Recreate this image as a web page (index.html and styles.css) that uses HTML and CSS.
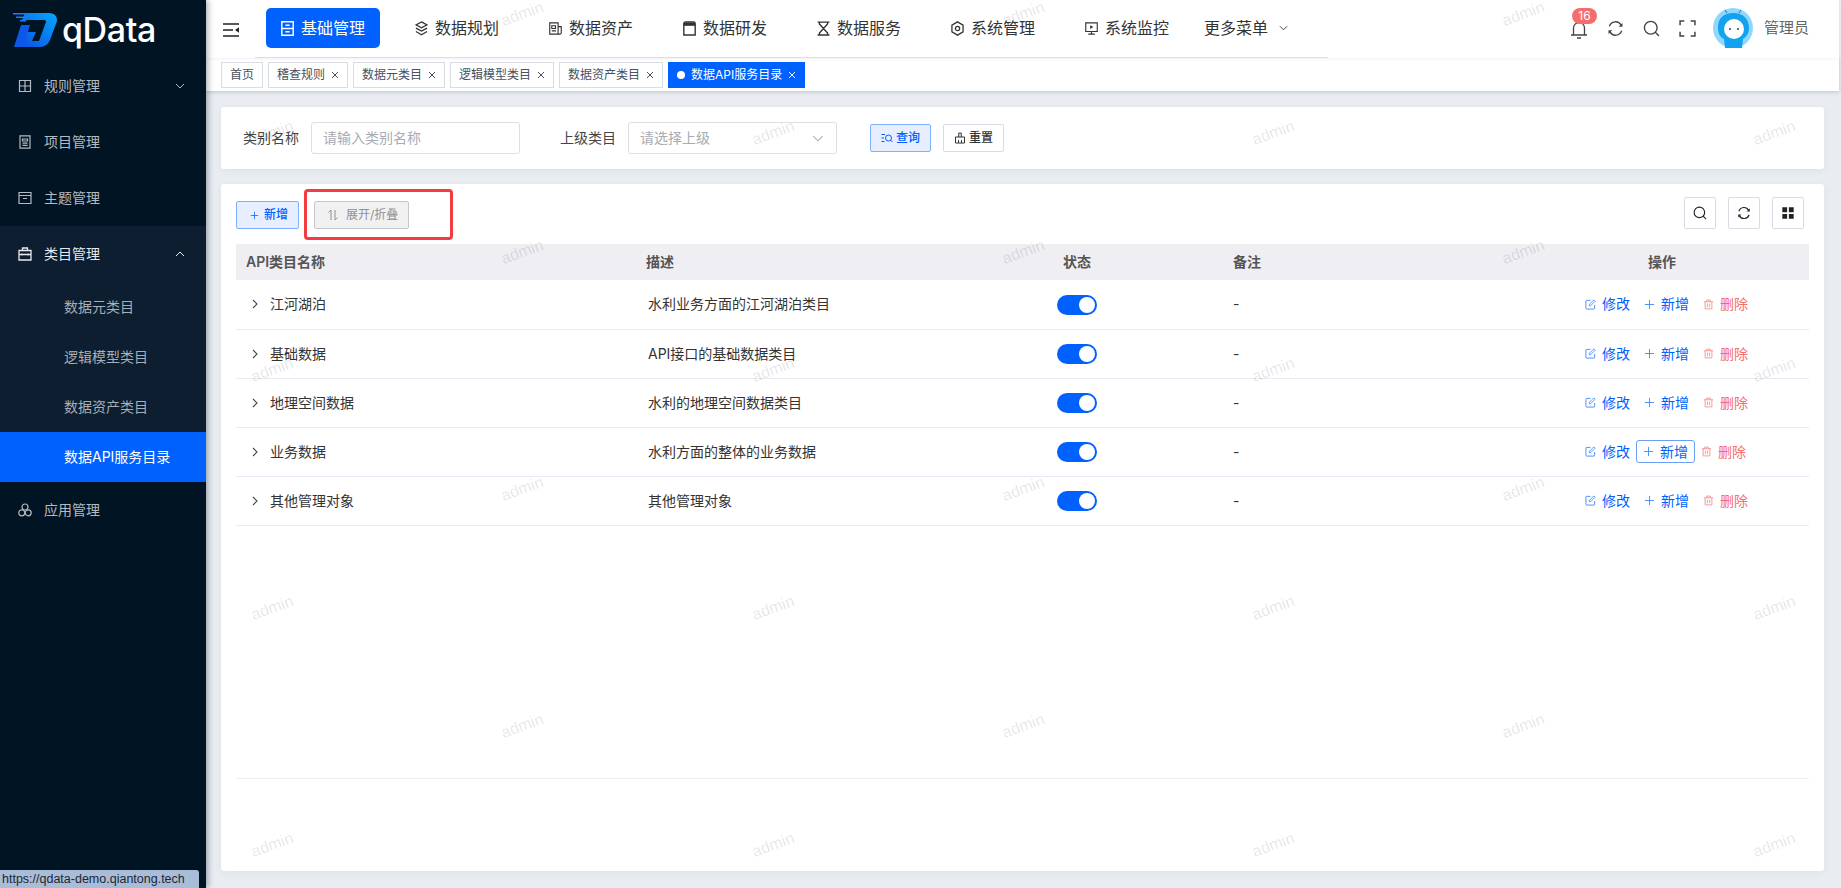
FILE: index.html
```html
<!DOCTYPE html>
<html lang="zh-CN">
<head>
<meta charset="utf-8">
<title>qData</title>
<link rel="stylesheet" href="styles.css">
</head>
<body>
<svg class="defs" width="0" height="0">
  <defs>
    <symbol id="i-edit" viewBox="0 0 12 12"><path d="M10.5 6.5V10.2a.8.8 0 0 1-.8.8H1.8a.8.8 0 0 1-.8-.8V2.3a.8.8 0 0 1 .8-.8H6" fill="none" stroke="currentColor"/><path d="M4.6 7.4 5 5.6 9.6 1l1.4 1.4L6.4 7z" fill="none" stroke="currentColor" stroke-width=".9"/></symbol>
    <symbol id="i-plus" viewBox="0 0 12 12"><path d="M6 1v10M1 6h10" fill="none" stroke="currentColor"/></symbol>
    <symbol id="i-trash" viewBox="0 0 12 12"><path d="M1 3h10M4 3V1.2h4V3M2.3 3v7.8h7.4V3M4.8 5v4M7.2 5v4" fill="none" stroke="currentColor"/></symbol>
    <symbol id="i-right" viewBox="0 0 6 10"><path d="M1 1l4 4-4 4" fill="none" stroke="currentColor" stroke-width="1.1"/></symbol>
    <symbol id="i-x" viewBox="0 0 8 8"><path d="M1 1l6 6M7 1L1 7" fill="none" stroke="currentColor" stroke-width="1"/></symbol>
    <symbol id="i-refresh" viewBox="0 0 16 16"><path d="M2.2 6A6 6 0 0 1 13.3 5M13.8 10A6 6 0 0 1 2.7 11" fill="none" stroke="currentColor" stroke-width="1.3"/><path d="M14.6 2.8v3.6h-3.6zM1.4 13.2V9.6H5z" fill="currentColor"/></symbol>
    <symbol id="i-search" viewBox="0 0 16 16"><circle cx="7.3" cy="7.3" r="6" fill="none" stroke="currentColor" stroke-width="1.3"/><path d="M11.6 11.6 15 15" fill="none" stroke="currentColor" stroke-width="1.3"/></symbol>
  </defs>
</svg>

<aside class="sidebar">
  <div class="logo">
    <svg class="logo-mark" viewBox="0 0 44 34" width="44" height="34">
      <defs>
        <linearGradient id="lg" x1="0" y1="1" x2="1" y2="0"><stop offset="0" stop-color="#0a4fe0"/><stop offset="1" stop-color="#05a8ff"/></linearGradient>
      </defs>
      <path d="M12 0H36Q44 0 44 8L37 27Q34 34 27 34H6L11 19H23L19 28H26L33 9Q33 7 31 7H9z" fill="url(#lg)"/>
      <path d="M8 12H17L11 34H1z" fill="#0b58ea"/>
      <path d="M0 0h13v1.6H0zM3 3.5h11v1.6H3zM7 7h6v1.6H7z" fill="#1c7bff"/>
    </svg>
    <span class="logo-text">qData</span>
  </div>
  <nav class="menu">
    <a class="menu-item">
      <svg class="mi" viewBox="0 0 14 14"><path d="M1.5 1.5h11v11h-11zM7 1.5v11M1.5 7h11" fill="none" stroke="currentColor" stroke-width="1.2"/></svg>
      <span>规则管理</span>
      <svg class="arrow" viewBox="0 0 10 6"><path d="M1 1l4 4 4-4" fill="none" stroke="currentColor"/></svg>
    </a>
    <a class="menu-item">
      <svg class="mi" viewBox="0 0 14 14"><path d="M2 .8h10v12.4H2zM4.5 4h5v2h-5zM4.5 8.2h5M4.5 10.4h5" fill="none" stroke="currentColor" stroke-width="1.2"/></svg>
      <span>项目管理</span>
    </a>
    <a class="menu-item">
      <svg class="mi" viewBox="0 0 14 14"><path d="M1 1.5h12v11H1zM1 4.5h12M5 7.5h4" fill="none" stroke="currentColor" stroke-width="1.2"/></svg>
      <span>主题管理</span>
    </a>
    <div class="group">
      <a class="menu-item open">
        <svg class="mi" viewBox="0 0 14 14"><path d="M1 3.5h12v9.5H1zM4.5 3.5V1h5v2.5M1 7.5h12M4 6.5v2M10 6.5v2" fill="none" stroke="currentColor" stroke-width="1.3"/></svg>
        <span>类目管理</span>
        <svg class="arrow" viewBox="0 0 10 6"><path d="M1 5l4-4 4 4" fill="none" stroke="currentColor"/></svg>
      </a>
      <a class="sub-item">数据元类目</a>
      <a class="sub-item">逻辑模型类目</a>
      <a class="sub-item">数据资产类目</a>
      <a class="sub-item active">数据API服务目录</a>
    </div>
    <a class="menu-item">
      <svg class="mi" viewBox="0 0 14 14"><circle cx="7" cy="4" r="3" fill="none" stroke="currentColor" stroke-width="1.2"/><circle cx="3.8" cy="9.8" r="3" fill="none" stroke="currentColor" stroke-width="1.2"/><circle cx="10.2" cy="9.8" r="3" fill="none" stroke="currentColor" stroke-width="1.2"/></svg>
      <span>应用管理</span>
    </a>
  </nav>
</aside>

<main class="main">
  <header class="topbar">
    <svg class="hamburger" viewBox="0 0 16 14"><path d="M0 1h16M0 7h10M0 13h16" fill="none" stroke="#222" stroke-width="1.6"/><path d="M16 4.2v5.6L12 7z" fill="#222"/></svg>
    <div class="topnav">
      <a class="nav-item active">
        <svg class="ni" viewBox="0 0 12 14"><path d="M.7.7h10.6v12.6H.7zM.7 7h10.6M4 4h4M4 10h4" fill="none" stroke="currentColor" stroke-width="1.3"/></svg>
        基础管理
      </a>
      <a class="nav-item">
        <svg class="ni" viewBox="0 0 12 14"><path d="M6 .8 11.2 3.6 6 6.4.8 3.6zM.8 6.6 6 9.4l5.2-2.8M.8 9.8 6 12.8l5.2-3" fill="none" stroke="currentColor" stroke-width="1.2"/></svg>
        数据规划
      </a>
      <a class="nav-item">
        <svg class="ni" viewBox="0 0 14 14"><path d="M.8 1h9v12H.8zM9.8 5h3.4v6.6a1.4 1.4 0 0 1-1.4 1.4H9.800M3 4h4v3H3zM3 9.500h4.500" fill="none" stroke="currentColor" stroke-width="1.2"/></svg>
        数据资产
      </a>
      <a class="nav-item">
        <svg class="ni" viewBox="0 0 12 14"><path d="M.7 2.500a1.600 1.600 0 0 1 1.600-1.600h7.400a1.600 1.600 0 0 1 1.600 1.600v10.600H.7z" fill="none" stroke="currentColor" stroke-width="1.300"/><path d="M.7 1.500h10.600v3H.7z" fill="currentColor"/></svg>
        数据研发
      </a>
      <a class="nav-item">
        <svg class="ni" viewBox="0 0 12 14"><path d="M.5 1h11M.5 13h11M2.200 1v1.800L9.800 11.200V13M9.800 1v1.800L2.200 11.200V13" fill="none" stroke="currentColor" stroke-width="1.300"/></svg>
        数据服务
      </a>
      <a class="nav-item">
        <svg class="ni" viewBox="0 0 12 14"><path d="M6 .8 11.200 3.800v6.400L6 13.200.8 10.200V3.800z" fill="none" stroke="currentColor" stroke-width="1.200"/><circle cx="6" cy="7" r="2" fill="none" stroke="currentColor" stroke-width="1.200"/></svg>
        系统管理
      </a>
      <a class="nav-item">
        <svg class="ni" viewBox="0 0 14 14"><path d="M.8 1h12.400v9.200H.8zM7 10.200v2.800M3.500 13h7" fill="none" stroke="currentColor" stroke-width="1.200"/><path d="M5.600 3.500v4L9 5.500z" fill="currentColor"/></svg>
        系统监控
      </a>
      <a class="nav-item more">
        更多菜单
        <svg class="more-arrow" viewBox="0 0 10 6"><path d="M1 1l4 4 4-4" fill="none" stroke="currentColor"/></svg>
      </a>
    </div>
    <div class="tools">
      <span class="tool bell">
        <svg viewBox="0 0 18 18" width="18" height="18"><path d="M3.500 14V7a5.500 5.500 0 0 1 11 0v7M1 14h16M7 17h4" fill="none" stroke="#444" stroke-width="1.300"/></svg>
        <b class="badge">16</b>
      </span>
      <svg class="tool-ic"><use href="#i-refresh"/></svg>
      <svg class="tool-ic"><use href="#i-search"/></svg>
      <svg class="tool-ic" viewBox="0 0 16 16"><path d="M1 5V1h4M11 1h4v4M15 11v4h-4M5 15H1v-4" fill="none" stroke="#444" stroke-width="1.400"/></svg>
      <svg class="avatar" viewBox="0 0 40 40">
        <circle cx="20" cy="20" r="20" fill="#90d7fd"/>
        <path d="M5 20C5 8 13 5 21 5s15 5 15 15c0 6-3 9-6 11l-1 9H12l-1-9c-4-2-6-6-6-11z" fill="#12a3f0"/>
        <circle cx="21" cy="21" r="10" fill="#fff"/>
        <circle cx="17" cy="21" r="1" fill="#245"/><circle cx="25" cy="21" r="1" fill="#245"/>
        <path d="M14 5l-2-3M26 5l2-3" stroke="#0f6fd0" fill="none"/>
      </svg>
      <span class="user">管理员</span>
    </div>
  </header>

  <div class="tags">
    <a class="tag">首页</a>
    <a class="tag">稽查规则<svg class="x"><use href="#i-x"/></svg></a>
    <a class="tag">数据元类目<svg class="x"><use href="#i-x"/></svg></a>
    <a class="tag">逻辑模型类目<svg class="x"><use href="#i-x"/></svg></a>
    <a class="tag">数据资产类目<svg class="x"><use href="#i-x"/></svg></a>
    <a class="tag active"><i class="dot"></i>数据API服务目录<svg class="x"><use href="#i-x"/></svg></a>
  </div>

  <div class="content">
    <section class="card search">
      <label class="lbl">类别名称</label>
      <span class="field">请输入类别名称</span>
      <label class="lbl second">上级类目</label>
      <span class="field">请选择上级<svg class="sel-arrow" viewBox="0 0 10 6"><path d="M1 1l4 4 4-4" fill="none" stroke="currentColor" stroke-width=".9"/></svg></span>
      <button class="btn primary query"><svg class="bi" viewBox="0 0 12 12"><path d="M.5 2.500h3.500M.5 6h2.500M.5 9.500h3" fill="none" stroke="currentColor"/><circle cx="7.500" cy="6" r="3" fill="none" stroke="currentColor"/><path d="M9.700 8.200 11.500 10" stroke="currentColor" fill="none"/></svg>查询</button>
      <button class="btn"><svg class="bi" viewBox="0 0 12 12"><path d="M4.800 5V1h2.400v4M1.500 5h9v6h-9zM4.500 8v3M7.500 8v3" fill="none" stroke="currentColor"/></svg>重置</button>
    </section>

    <section class="card list">
      <div class="toolbar">
        <button class="btn primary"><svg class="bi plus"><use href="#i-plus"/></svg>新增</button>
        <button class="btn muted"><svg class="bi" viewBox="0 0 12 12"><path d="M4 11V1L1.500 3.500M8 1v10l2.500-2.500" fill="none" stroke="currentColor"/></svg>展开/折叠</button>
        <div class="spacer"></div>
        <button class="sq"><svg class="sq-ic"><use href="#i-search"/></svg></button>
        <button class="sq"><svg class="sq-ic"><use href="#i-refresh"/></svg></button>
        <button class="sq"><svg class="sq-ic" viewBox="0 0 16 16"><path d="M1.500 1.500h5.500v5.500H1.500zM9 1.500h5.500v5.500H9zM1.500 9h5.500v5.500H1.500zM9 9h5.500v5.500H9z" fill="#222"/></svg></button>
      </div>
      <div class="highlight"></div>
      <div class="table-wrap">
        <table class="table">
          <colgroup><col class="c1"><col class="c2"><col class="c3"><col class="c4"><col class="c5"></colgroup>
          <thead><tr><th>API类目名称</th><th>描述</th><th class="center">状态</th><th class="rem">备注</th><th class="center">操作</th></tr></thead>
          <tbody>
            <tr>
              <td><svg class="tree"><use href="#i-right"/></svg>江河湖泊</td>
              <td class="desc">水利业务方面的江河湖泊类目</td>
              <td class="center"><i class="switch"></i></td>
              <td class="rem">-</td>
              <td class="ops"><a class="op"><svg class="oi"><use href="#i-edit"/></svg>修改</a><a class="op"><svg class="oi"><use href="#i-plus"/></svg>新增</a><a class="op danger"><svg class="oi"><use href="#i-trash"/></svg>删除</a></td>
            </tr>
            <tr>
              <td><svg class="tree"><use href="#i-right"/></svg>基础数据</td>
              <td class="desc">API接口的基础数据类目</td>
              <td class="center"><i class="switch"></i></td>
              <td class="rem">-</td>
              <td class="ops"><a class="op"><svg class="oi"><use href="#i-edit"/></svg>修改</a><a class="op"><svg class="oi"><use href="#i-plus"/></svg>新增</a><a class="op danger"><svg class="oi"><use href="#i-trash"/></svg>删除</a></td>
            </tr>
            <tr>
              <td><svg class="tree"><use href="#i-right"/></svg>地理空间数据</td>
              <td class="desc">水利的地理空间数据类目</td>
              <td class="center"><i class="switch"></i></td>
              <td class="rem">-</td>
              <td class="ops"><a class="op"><svg class="oi"><use href="#i-edit"/></svg>修改</a><a class="op"><svg class="oi"><use href="#i-plus"/></svg>新增</a><a class="op danger"><svg class="oi"><use href="#i-trash"/></svg>删除</a></td>
            </tr>
            <tr>
              <td><svg class="tree"><use href="#i-right"/></svg>业务数据</td>
              <td class="desc">水利方面的整体的业务数据</td>
              <td class="center"><i class="switch"></i></td>
              <td class="rem">-</td>
              <td class="ops"><a class="op"><svg class="oi"><use href="#i-edit"/></svg>修改</a><a class="op focus"><svg class="oi"><use href="#i-plus"/></svg>新增</a><a class="op danger"><svg class="oi"><use href="#i-trash"/></svg>删除</a></td>
            </tr>
            <tr>
              <td><svg class="tree"><use href="#i-right"/></svg>其他管理对象</td>
              <td class="desc">其他管理对象</td>
              <td class="center"><i class="switch"></i></td>
              <td class="rem">-</td>
              <td class="ops"><a class="op"><svg class="oi"><use href="#i-edit"/></svg>修改</a><a class="op"><svg class="oi"><use href="#i-plus"/></svg>新增</a><a class="op danger"><svg class="oi"><use href="#i-trash"/></svg>删除</a></td>
            </tr>
          </tbody>
        </table>
      </div>
    </section>
  </div>
</main>

<div class="watermark" aria-hidden="true">
  <div class="wm-row odd"><span>admin</span><span>admin</span><span>admin</span><span>admin</span></div>
  <div class="wm-row"><span>admin</span><span>admin</span><span>admin</span><span>admin</span></div>
  <div class="wm-row odd"><span>admin</span><span>admin</span><span>admin</span><span>admin</span></div>
  <div class="wm-row"><span>admin</span><span>admin</span><span>admin</span><span>admin</span></div>
  <div class="wm-row odd"><span>admin</span><span>admin</span><span>admin</span><span>admin</span></div>
  <div class="wm-row"><span>admin</span><span>admin</span><span>admin</span><span>admin</span></div>
  <div class="wm-row odd"><span>admin</span><span>admin</span><span>admin</span><span>admin</span></div>
  <div class="wm-row"><span>admin</span><span>admin</span><span>admin</span><span>admin</span></div>
</div>

<div class="statusbar">https://qdata-demo.qiantong.tech</div>
</body>
</html>
```

FILE: styles.css
```css
* { box-sizing: border-box; }
html, body { margin: 0; height: 100%; }
body {
  width: 1841px;
  height: 888px;
  overflow: hidden;
  position: relative;
  display: flex;
  background: #e9edf1;
  color: #333;
  font: 14px/20px "Inter", "Noto Sans CJK SC", sans-serif;
}
a { color: inherit; text-decoration: none; }
i { font-style: normal; }
button { font: inherit; cursor: pointer; }
.defs { position: absolute; }

/* sidebar */
.sidebar {
  flex: 0 0 206px;
  background: #011423;
  box-shadow: 2px 0 6px rgba(0, 21, 41, .35);
  color: #b4bac1;
  position: relative;
  z-index: 3;
}
.logo { height: 58px; display: flex; align-items: flex-start; padding: 13px 0 0 13px; }
.logo-mark { flex: none; }
.logo-text {
  margin-left: 5px;
  color: #fff;
  font: 500 34px/34px "Inter", sans-serif;
  letter-spacing: -.4px;
}
.menu-item {
  height: 56px;
  display: flex;
  align-items: center;
  padding-left: 18px;
  position: relative;
}
.mi { width: 14px; height: 14px; margin-right: 12px; flex: none; }
.arrow { width: 10px; height: 6px; position: absolute; left: 175px; top: 25px; }
.group { background: #0c1e2f; }
.open { color: #e6eaee; }
.sub-item { display: block; height: 50px; line-height: 50px; padding-left: 64px; color: #a8afb6; }
.sub-item.active { background: #0061ff; color: #fff; }

/* main */
.main { width: 1633px; display: flex; flex-direction: column; position: relative; }
.topbar {
  height: 58px;
  background: #fff;
  display: flex;
  align-items: flex-start;
  position: relative;
  z-index: 1;
  box-shadow: 0 1px 3px rgba(0, 21, 41, .06);
}
.hamburger { width: 16px; height: 14px; margin: 23px 0 0 17px; flex: none; }
.topnav {
  width: 1073px;
  height: 58px;
  margin-left: 16px;
  padding-left: 11px;
  border-bottom: 1px solid #dcdde6;
  display: flex;
  gap: 20px;
}
.nav-item {
  width: 114px;
  height: 40px;
  margin-top: 8px;
  font-size: 16px;
  line-height: 38px;
  display: flex;
  align-items: center;
  justify-content: center;
  color: #333;
  border-radius: 5px;
}
.nav-item.active { background: #0061ff; color: #fff; }
.ni { width: 13px; height: 15px; margin-right: 7px; flex: none; }
.nav-item.more { width: auto; margin-left: 0; }
.more-arrow { width: 9px; height: 6px; margin-left: 11px; }
.tools { flex: 1; position: relative; display: flex; align-items: center; height: 56px; padding-left: 242px; }
.tool { position: relative; width: 18px; height: 18px; margin-top: 3px; display: block; }
.tool svg { display: block; }
.badge {
  position: absolute;
  left: 2px;
  top: -13px;
  width: 25px;
  height: 16px;
  border-radius: 8px;
  background: #f56c6c;
  color: #fff;
  font: 400 12px/16px "Inter", sans-serif;
  text-align: center;
}
.tool-ic { width: 17px; height: 17px; color: #444; margin-left: 19px; flex: none; }
.avatar { width: 40px; height: 40px; margin-left: 17px; flex: none; }
.user { margin-left: 11px; color: #666; font-size: 15px; white-space: nowrap; }

.tags {
  height: 33px;
  background: #fff;
  display: flex;
  gap: 5px;
  padding: 4px 0 0 15px;
  box-shadow: 0 1px 4px rgba(0, 21, 41, .2);
  position: relative;
}
.tag {
  height: 26px;
  border: 1px solid #d8dce5;
  padding: 0 8px;
  display: flex;
  align-items: center;
  font-size: 12px;
  color: #495060;
}
.tag.active { background: #0061ff; border-color: #0061ff; color: #fff; }
.dot { width: 8px; height: 8px; border-radius: 50%; background: #fff; margin-right: 6px; }
.x { width: 8px; height: 8px; margin-left: 6px; }
.tag .x { margin-right: 0; }

.content { flex: 1; padding: 16px 15px 17px; display: flex; flex-direction: column; gap: 15px; }
.card { background: #fff; border-radius: 3px; box-shadow: 0 2px 8px rgba(0, 21, 41, .05); }
.search { height: 62px; display: flex; align-items: center; padding-left: 22px; }
.lbl { color: #444; margin-right: 12px; white-space: nowrap; }
.lbl.second { margin-left: 40px; }
.field {
  width: 209px;
  height: 32px;
  border: 1px solid #dcdfe6;
  border-radius: 3px;
  padding: 0 11px;
  line-height: 30px;
  color: #a8abb2;
  position: relative;
}
.sel-arrow { width: 12px; height: 7px; position: absolute; right: 12px; top: 12px; color: #a8abb2; }
.btn {
  height: 28px;
  padding: 0 10px;
  border: 1px solid #d8dce5;
  border-radius: 2px;
  background: #fff;
  color: #333;
  font-size: 12px;
  font-weight: 500;
  line-height: 26px;
  display: flex;
  align-items: center;
  margin-left: 12px;
}
.btn.primary { background: #e6eeff; border-color: #7fb0ff; color: #0061ff; }
.btn.query { margin-left: 33px; }
.bi { width: 12px; height: 12px; margin-right: 3px; flex: none; }
.bi.plus { width: 9px; height: 9px; margin: 0 5px 0 3px; }
.btn.muted { background: #f1f1f1; border-color: #c4c6cb; color: #8e9095; margin-left: 15px; padding: 0 10px 0 12px; font-weight: 400; }
.btn.muted .bi { margin-right: 7px; }

.list { flex: 1; padding: 13px 15px 0; position: relative; }
.toolbar { height: 32px; display: flex; align-items: flex-end; }
.toolbar > .btn:first-child { margin-left: 0; }
.spacer { flex: 1; }
.sq {
  width: 32px;
  height: 32px;
  border: 1px solid #d8dce5;
  border-radius: 2px;
  background: #fff;
  margin-right: 12px;
  padding: 0;
  display: flex;
  align-items: center;
  justify-content: center;
}
.sq:last-of-type { margin-right: 5px; }
.sq-ic { width: 14px; height: 14px; color: #222; }
.highlight {
  position: absolute;
  left: 83px;
  top: 5px;
  width: 149px;
  height: 51px;
  border: 3px solid #f33c41;
  border-radius: 4px;
}
.table-wrap { height: 535px; margin-top: 15px; border-bottom: 1px solid #ebeef5; }
.table { width: 100%; border-collapse: collapse; table-layout: fixed; }
.c1 { width: 400px; } .c2 { width: 351px; } .c3 { width: 180px; } .c4 { width: 348px; } .c5 { width: 294px; }
.table th {
  height: 36px;
  padding: 0 0 0 10px;
  background: #eeeef3;
  color: #555;
  font-weight: 600;
  text-align: left;
}
.table td { height: 49px; padding: 0 0 0 10px; border-bottom: 1px solid #e8ebf3; color: #333; white-space: nowrap; }
.table .center { text-align: center; padding-left: 0; }
.table .rem { padding-left: 66px; }
.table td.desc { padding-left: 12px; }
.tree { width: 6px; height: 10px; margin: 0 12px 0 6px; color: #444; vertical-align: 0; }
.switch {
  display: inline-block;
  width: 40px;
  height: 20px;
  border-radius: 10px;
  background: #0061ff;
  position: relative;
  vertical-align: middle;
}
.switch::after {
  content: "";
  position: absolute;
  right: 2px;
  top: 2px;
  width: 16px;
  height: 16px;
  border-radius: 50%;
  background: #fff;
}
.table td.ops { padding-left: 69px; }
.op {
  display: inline-flex;
  align-items: center;
  height: 23px;
  color: #0061ff;
  margin-right: 12px;
  font-size: 14px;
  border: 1px solid transparent;
  border-radius: 3px;
  padding: 0;
}
.op.danger { color: #f56c6c; margin-right: 0; }
.op.focus { border-color: #6b9ff5; margin: 0 5px -1px -7px; padding: 0 6px; }
.oi { width: 11px; height: 11px; margin-right: 6px; flex: none; opacity: .75; }

/* watermark */
.watermark {
  position: absolute;
  left: 0;
  top: -45px;
  width: 1841px;
  height: 950px;
  overflow: hidden;
  pointer-events: none;
  z-index: 2;
}
.wm-row { height: 118.7px; display: flex; align-items: center; padding-left: 22px; }
.wm-row.odd { padding-left: 272px; }
.wm-row span {
  flex: 0 0 500.7px;
  text-align: center;
  color: rgba(0, 0, 0, .11);
  font: 16px/20px "Liberation Sans", sans-serif;
  transform: rotate(-20deg);
}

.statusbar {
  position: absolute;
  left: 0;
  bottom: 0;
  width: 199px;
  height: 18px;
  padding-left: 2px;
  background: #a9bdd8;
  border-top-right-radius: 3px;
  color: #1c2733;
  font: 12.5px/18px "Liberation Sans", sans-serif;
  white-space: nowrap;
  z-index: 4;
}
```
